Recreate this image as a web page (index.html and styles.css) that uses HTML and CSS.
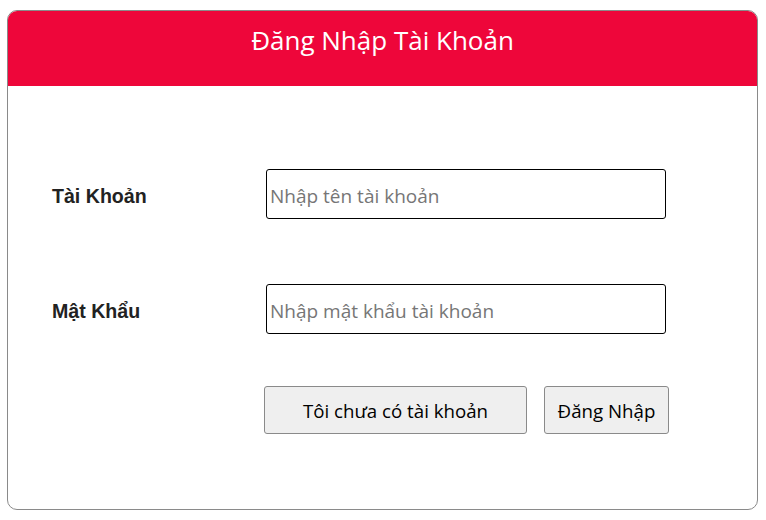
FILE: index.html
```html
<!DOCTYPE html>
<html lang="vi">
<head>
<meta charset="utf-8">
<link rel="stylesheet" href="styles.css">
</head>
<body>
<div class="card">
  <div class="card-header">Đăng Nhập Tài Khoản</div>
  <form class="card-body">
    <div class="row">
      <label class="label">Tài Khoản</label>
      <input class="field" type="text" placeholder="Nhập tên tài khoản">
    </div>
    <div class="row row-second">
      <label class="label">Mật Khẩu</label>
      <input class="field" type="password" placeholder="Nhập mật khẩu tài khoản">
    </div>
    <div class="actions">
      <button type="button" class="btn btn-wide">Tôi chưa có tài khoản</button>
      <button type="button" class="btn btn-login">Đăng Nhập</button>
    </div>
  </form>
</div>
</body>
</html>
```

FILE: styles.css
```css
html, body {
  margin: 0;
  padding: 0;
  background: #ffffff;
}
body {
  padding: 10px 0 0 7px;
  font-family: "Open Sans", "Noto Sans", sans-serif;
}
.card {
  width: 749px;
  height: 498px;
  border: 1px solid #8a8a8a;
  border-radius: 10px;
  overflow: hidden;
  box-sizing: content-box;
}
.card-header {
  height: 75px;
  background: #ee063a;
  color: #ffffff;
  font-size: 26px;
  line-height: 36px;
  text-align: center;
  padding-top: 11px;
  box-sizing: border-box;
}
.card-body {
  padding: 83px 0 0 44px;
  display: flex;
  flex-direction: column;
}
.row {
  display: flex;
  align-items: center;
}
.row-second {
  margin-top: 65px;
}
.label {
  width: 214px;
  padding-top: 5px;
  font-family: "Liberation Sans", Arial, sans-serif;
  font-weight: bold;
  font-size: 19.6px;
  color: #222222;
}
.field {
  width: 400px;
  height: 50px;
  box-sizing: border-box;
  border: 1px solid #000000;
  border-radius: 3px;
  padding: 3px 3px 0;
  margin: 0;
  font-family: "Open Sans", "Noto Sans", sans-serif;
  font-size: 19px;
  outline: none;
}
.field::placeholder {
  color: #767676;
}
.actions {
  display: flex;
  gap: 17px;
  margin-top: 52px;
  padding-left: 212px;
}
.btn {
  height: 48px;
  box-sizing: border-box;
  background: #efefef;
  border: 1px solid #8a8a8a;
  border-radius: 3px;
  font-family: "Open Sans", "Noto Sans", sans-serif;
  font-size: 18.7px;
  color: #000000;
  margin: 0;
  padding: 0;
}
.btn-wide {
  width: 263px;
}
.btn-login {
  width: 125px;
}
```
